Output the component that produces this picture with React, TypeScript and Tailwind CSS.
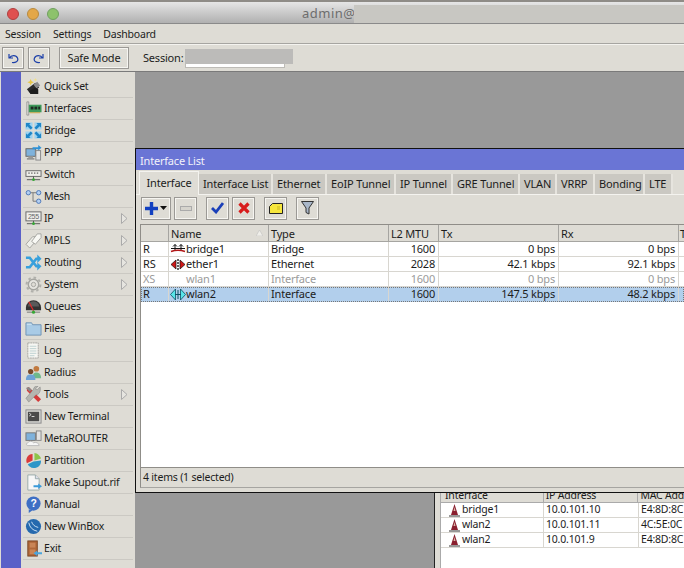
import React from "react";

const I = ({ children, s = 17 }: { children: React.ReactNode; s?: number }) => (
  <svg width={s} height={s} viewBox="0 0 18 18" className="shrink-0">{children}</svg>
);

const icons: Record<string, React.ReactNode> = {
  quick: (<I><path d="M2 12l9-7 4 5-9 7z" fill="#2b2b2b" /><path d="M9 7l4-3 3 4-4 3z" fill="#8a8a8a" /><path d="M4 14l2 3h8v-5l-3-2z" fill="#1e1e1e" /><path d="M6 1l1 2.5L9.5 4.500 7 5.500 6 8 5 5.500 2.500 4.500 5 3.500z" fill="#e8c84a" /><path d="M11 0l.6 1.400L13 2l-1.400.6L11 4l-.6-1.400L9 2l1.400-.6z" fill="#f2e08a" /></I>),
  iface: (<I><path d="M2 2h2v14H2z" fill="#e6e6e0" stroke="#888" strokeWidth=".8" /><rect x="4" y="5" width="13.500" height="8" fill="#3f9a5a" /><rect x="6" y="7" width="3" height="3" fill="#1e2a22" /><rect x="10" y="7" width="3" height="3" fill="#1e2a22" /><rect x="14" y="7" width="2" height="3" fill="#1e2a22" /><rect x="5" y="13" width="11" height="1" fill="#c9a640" /></I>),
  bridge: (<I><g fill="#9ed3f0"><rect x="0.500" y="0.500" width="7.500" height="7.500" /><rect x="10" y="0.500" width="7.500" height="7.500" /><rect x="0.500" y="10" width="7.500" height="7.500" /><rect x="10" y="10" width="7.500" height="7.500" /></g><g fill="#1f86c8"><path d="M1 1h5L4.500 2.500 8 6 6 8 2.500 4.500 1 6z" /><path d="M17 1h-5l1.500 1.500L10 6l2 2 3.500-3.500L17 6z" /><path d="M1 17h5l-1.500-1.500L8 12l-2-2-3.500 3.500L1 12z" /><path d="M17 17h-5l1.500-1.500L10 12l2-2 3.500 3.500L17 12z" /></g></I>),
  ppp: (<I><rect x="1" y="5" width="10" height="8" fill="#7fb2dc" stroke="#666" /><rect x="3.500" y="13" width="5" height="2" fill="#999" /><rect x="2" y="15" width="8" height="1.500" fill="#888" /><rect x="11.500" y="7" width="5" height="10" fill="#e2e2e2" stroke="#888" /><path d="M8 3.500h6V1l3.500 3L14 7V5.500H8z" fill="#2f92d6" /></I>),
  sw: (<I><rect x="1" y="5" width="16" height="6" fill="#f0f0ec" stroke="#666" /><path d="M3.500 7.500h1.500M6.500 7.500h1.500M9.500 7.500h1.500M12.500 7.500h1.500" stroke="#333" /><path d="M2 14.500h14" stroke="#555" /><path d="M9 11v3" stroke="#555" /><circle cx="9" cy="14.500" r="1.500" fill="#35a835" /></I>),
  mesh: (<I><circle cx="3.500" cy="5" r="2.300" fill="#b4d0f2" stroke="#4a76b8" /><circle cx="14.500" cy="5" r="2.300" fill="#b4d0f2" stroke="#4a76b8" /><circle cx="14.500" cy="14" r="2.300" fill="#b4d0f2" stroke="#4a76b8" /><path d="M6 5h2.500v9h3.500M8.500 5h3.500" fill="none" stroke="#777" /></I>),
  ip: (<I><rect x="1" y="2" width="16" height="9.500" fill="#f0f0ec" stroke="#666" /><text x="9" y="9.500" fontSize="7.500" textAnchor="middle" fill="#666" fontFamily="Liberation Sans">255</text><path d="M9 11.500v3M2 14.500h14" stroke="#555" /><circle cx="9" cy="14.500" r="1.500" fill="#35a835" /></I>),
  mpls: (<I><path d="M1 13l7-8h4v4l-7 8z" fill="#efefea" stroke="#a5a5a0" /><path d="M7 10l6-8h4v4l-6 7z" fill="#f8f8f4" stroke="#a5a5a0" /></I>),
  routing: (<I><path d="M1 4h4l7 9h2M1 14h4l7-9h2" fill="none" stroke="#37a0dc" strokeWidth="2.800" /><path d="M13 0.500l4.500 4.500L13 9.500zM13 9l4.500 4L13 17.500z" fill="#37a0dc" /></I>),
  system: (<I><circle cx="9" cy="9" r="5.500" fill="#e6e5e0" stroke="#a5a5a0" strokeWidth="1.500" /><circle cx="9" cy="9" r="2.300" fill="#dedcd5" stroke="#a5a5a0" /><circle cx="9" cy="9" r="7.300" fill="none" stroke="#b0b0ab" strokeWidth="2.200" strokeDasharray="2.700 3" /></I>),
  queues: (<I><path d="M1 10a8 7.500 0 0 1 16 0v3H1z" fill="#333" /><path d="M3 9a6 5.500 0 0 1 12 0z" fill="#5a5a5a" /><path d="M4 4l5 9.500" stroke="#e02a2a" strokeWidth="1.300" /><path d="M2 15h14" stroke="#777" /><circle cx="9" cy="15" r="1.700" fill="#35a835" /></I>),
  files: (<I><path d="M1 3h6l1 2h9v11H1z" fill="#a9cbe6" stroke="#6f93b4" /><path d="M2 4h5v1H2z" fill="#d4e6f4" /></I>),
  log: (<I><path d="M3 1h11v16H3z" fill="#f6f6f2" stroke="#a5a5a0" strokeDasharray="2 .6" /><path d="M5 4.500h7M5 7h7M5 9.500h7M5 12h7M5 14.500h5" stroke="#bcd0d0" /></I>),
  radius: (<I><circle cx="12" cy="5" r="3" fill="#c27a3f" /><path d="M8 15c0-5 2-6 4-6s5 1 5 6z" fill="#6fb98a" /><circle cx="6" cy="8" r="2.800" fill="#7a4a2a" /><path d="M1 17c0-5 2-6 5-6s5 1 5 6z" fill="#6ea2d6" /></I>),
  tools: (<I><path d="M2 2l2-1 13 13-3 3L2 5z" fill="#d43a3a" /><path d="M1 2l3-1 3 3-2 2z" fill="#888" /><path d="M16 1l-3 3-2-1 3-3c-2-.5-5 1-5 3.500L1 13l3 4 8-8c3 .5 5-4 4-8z" fill="#b5b5b0" stroke="#777" strokeWidth=".5" /></I>),
  term: (<I><rect x="1" y="2" width="16" height="14" fill="#dcdcd8" stroke="#888" /><rect x="3" y="4" width="12" height="10" fill="#4a4a4a" /><path d="M4.500 5.500l2 1.500-2 1.500" stroke="#ddd" fill="none" /><path d="M7 9h3" stroke="#ddd" /></I>),
  meta: (<I><rect x="1" y="3" width="10" height="8" fill="#7fb2dc" stroke="#777" /><rect x="12" y="1" width="5" height="10" fill="#e2e2e2" stroke="#888" /><path d="M3 16.500c-2 0-2-3 0-3 1-2 5-2 6 0 2-1 6 0 6 3z" fill="#f6f6f6" stroke="#bbb" /></I>),
  part: (<I><path d="M8 2v7l-6 3C0 7 3 2 8 2z" fill="#d93a3a" /><path d="M10 1c3 0 6 3 7 6l-7 2z" fill="#8ec44a" /><path d="M3 13l6-3 8-1c0 5-3 8-8 8-3 0-5-2-6-4z" fill="#2d96c8" /></I>),
  sup: (<I><path d="M3 1h8l4 4v12H3z" fill="#f7f7f7" stroke="#9aa" /><path d="M11 1v4h4" fill="#dde" stroke="#9aa" /><path d="M9 12h5v-2l4 3-4 3v-2H9z" fill="#3a9ad9" /></I>),
  manual: (<I><circle cx="9" cy="8" r="7.500" fill="#3e6fc4" /><path d="M4 14v4l4-3z" fill="#3e6fc4" /><text x="9" y="12" fontSize="11" fontWeight="700" textAnchor="middle" fill="#fff" fontFamily="Liberation Sans">?</text></I>),
  winbox: (<I><circle cx="9" cy="9" r="8" fill="#2569ae" /><path d="M4 5c1 5 4 8 9 9M7 4c1 3 3 5 7 6" stroke="#cfe3f5" fill="none" /></I>),
  exit: (<I><rect x="3" y="1" width="10" height="16" fill="#b0683a" stroke="#7a4522" /><rect x="5" y="3" width="6" height="5" fill="#c98556" /><rect x="5" y="10" width="6" height="5" fill="#c98556" /><path d="M18 13h-5v-2l-4 3 4 3v-2h5z" fill="#4aa5dd" /></I>),
};

const menu: [string, string, boolean?][] = [
  ["Quick Set", "quick"], ["Interfaces", "iface"], ["Bridge", "bridge"], ["PPP", "ppp"], ["Switch", "sw"], ["Mesh", "mesh"],
  ["IP", "ip", true], ["MPLS", "mpls", true], ["Routing", "routing", true], ["System", "system", true], ["Queues", "queues"],
  ["Files", "files"], ["Log", "log"], ["Radius", "radius"], ["Tools", "tools", true], ["New Terminal", "term"], ["MetaROUTER", "meta"],
  ["Partition", "part"], ["Make Supout.rif", "sup"], ["Manual", "manual"], ["New WinBox", "winbox"], ["Exit", "exit"],
];

const btn = "flex items-center justify-center bg-[#dedcd5] border border-[#9b9995] shadow-[inset_1px_1px_0_#f6f5f1,inset_-1px_-1px_0_#f6f5f1]";

const tabs: [string, string][] = [
  ["Interface List", "w-[74px]"], ["Ethernet", "w-[54px]"], ["EoIP Tunnel", "w-[69px]"], ["IP Tunnel", "w-[57px]"], ["GRE Tunnel", "w-[67px]"],
  ["VLAN", "w-[37px]"], ["VRRP", "w-[38px]"], ["Bonding", "w-[50px]"], ["LTE", "w-[28px]"],
];

const BridgeI = () => (<svg width="16" height="13" viewBox="0 0 16 13"><path d="M1 5.500h14M5 1.500v6M11 1.500v6M3 3.500l2-2 2 2M9 3.500l2-2 2 2" fill="none" stroke="#111" /><path d="M1 8.500c4-1.500 10-1.500 14 0" fill="none" stroke="#b01818" strokeWidth="1.500" /></svg>);
const EtherI = () => (<svg width="16" height="13" viewBox="0 0 16 13"><path d="M1 6.500L6 2v9zM15 6.500L10 2v9z" fill="#d01818" stroke="#111" strokeWidth=".7" /><path d="M8 1v11" stroke="#222" strokeWidth="1.400" strokeDasharray="2 1" /></svg>);
const WlanI = () => (<svg width="16" height="13" viewBox="0 0 16 13"><path d="M.5 6.500L5.500 1v11zM15.500 6.500L10.500 1v11z" fill="#58e4e8" stroke="#0c5064" strokeWidth=".8" /><path d="M5 6.500h6M8 2v9" stroke="#0c5064" /></svg>);

const rows = [
  { f: "R", n: "bridge1", t: "Bridge", m: "1600", tx: "0 bps", rx: "0 bps", icon: <BridgeI /> },
  { f: "RS", n: "ether1", t: "Ethernet", m: "2028", tx: "42.1 kbps", rx: "92.1 kbps", icon: <EtherI /> },
  { f: "XS", n: "wlan1", t: "Interface", m: "1600", tx: "0 bps", rx: "0 bps", dim: true },
  { f: "R", n: "wlan2", t: "Interface", m: "1600", tx: "147.5 kbps", rx: "48.2 kbps", icon: <WlanI />, sel: true },
];

const Cone = () => (<svg width="13" height="13" viewBox="0 0 13 13"><path d="M6.500 0L10 11H3z" fill="#8a1f2f" /><path d="M6.500 3l1 4h-2z" fill="#d9b8a8" /><path d="M1 12h11" stroke="#333" /></svg>);

export default function App() {
  return (
    <div className="relative w-[684px] h-[568px] overflow-hidden flex flex-col bg-[#999999] text-[10.5px] tracking-[-0.2px] text-[#1c1c1c]" style={{ fontFamily: '"Noto Sans", sans-serif' }}>
      <div className="h-[24px] shrink-0 flex items-center border-t-2 border-b border-t-[#8f8c87] border-b-[#8a8a8a] bg-gradient-to-b from-[#e6e6e6] to-[#b0b0b0]">
        <div className="flex gap-[8px] pl-[7px] pt-[2px]">
          <span className="w-[12px] h-[12px] rounded-full bg-[#e0504f] border border-[#b04040]" />
          <span className="w-[12px] h-[12px] rounded-full bg-[#e3a748] border border-[#b88a40]" />
          <span className="w-[12px] h-[12px] rounded-full bg-[#8dc26c] border border-[#70a060]" />
        </div>
        <span className="ml-[243px] w-[52px] shrink-0 pt-[2px] text-[13px] text-[#6d6d6d] tracking-[0.5px] whitespace-nowrap">admin@</span>
        <div className="flex-1 self-stretch mt-[3px] bg-[#c8c7c2]" />
      </div>
      <div className="h-[20px] shrink-0 flex items-center gap-[12px] pl-[5px] pt-[2px] bg-[#dedcd5] border-b border-[#a6a5a1]">
        <span>Session</span><span>Settings</span><span>Dashboard</span>
      </div>
      <div className="h-[28px] shrink-0 flex items-center pl-[2px] bg-[#dedcd5] border-t border-t-[#f4f3ef] border-b border-b-[#7a7a7a]">
        <div className={btn + " w-[22px] h-[22px]"}>
          <svg width="12" height="11" viewBox="0 0 12 11"><path d="M2 1v4h4M2.500 5C4 2 9 1.500 10.500 5S8 10 5 9.500" fill="none" stroke="#1c3fa8" strokeWidth="1.200" /></svg>
        </div>
        <div className={btn + " w-[22px] h-[22px] ml-[4px]"}>
          <svg width="12" height="11" viewBox="0 0 12 11"><path d="M10 1v4H6M9.500 5C8 2 3 1.500 1.500 5S4 10 7 9.500" fill="none" stroke="#1c3fa8" strokeWidth="1.200" /></svg>
        </div>
        <div className={btn + " w-[70px] h-[22px] ml-[9px] text-[11px]"}>Safe Mode</div>
        <span className="ml-[14px] w-[42px] shrink-0 text-[11px]">Session:</span>
        <div className="relative w-[100px] h-[19px] bg-white border border-[#bdbbb6]">
          <div className="absolute left-[-1px] top-[-1px] w-[108px] h-[15px] bg-[#bcbbb9]" />
        </div>
      </div>
      <div className="flex-1 min-h-0 flex">
        <div className="w-[1px] bg-[#dedcd5]" />
        <div className="w-[20px] bg-[#5a60c8]" />
        <div className="w-[114px] bg-[#dedcd5] flex flex-col pt-[4px] pr-[2px] pl-[2px]">
          {menu.map(([label, ic, arrow]) => (
            <div key={label} className="h-[22px] shrink-0 flex items-center border-b border-[#cbc9c3] relative">
              <span className="w-[17px] ml-[2px] flex items-center justify-center">{icons[ic]}</span>
              <span className="ml-[2px] whitespace-nowrap">{label}</span>
              {arrow && (
                <svg width="7" height="11" viewBox="0 0 7 11" className="absolute left-[98px] top-[5px]"><path d="M.5.5L6 5.500.5 10.500z" fill="#e6e5e0" stroke="#aaa" /></svg>
              )}
            </div>
          ))}
        </div>
        <div className="flex-1" />
      </div>

      {/* back window */}
      <div className="absolute left-[434px] top-[487px] w-[250px] h-[81px] overflow-hidden bg-[#dedcd5] border-l border-[#222] pl-[5px]">
        <div className="bg-white h-full border-l border-[#aaa]">
          <div className="h-[16px] bg-[#dedcd5] border-b border-[#aaa] flex items-end">
            <span className="w-[103px] pl-[4px] leading-[14px] border-r border-[#aaa]">Interface</span>
            <span className="w-[95px] pl-[2px] leading-[14px] border-r border-[#aaa]">IP Address</span>
            <span className="pl-[2px] leading-[14px] whitespace-nowrap">MAC Add</span>
          </div>
          {[["bridge1", "10.0.101.10", "E4:8D:8C"], ["wlan2", "10.0.101.11", "4C:5E:0C"], ["wlan2", "10.0.101.9", "E4:8D:8C"]].map((r, i) => (
            <div key={i} className="h-[15px] flex items-center border-b border-[#d8d6d0]">
              <span className="w-[103px] h-full flex items-center gap-[1px] pl-[7px] border-r border-[#d8d6d0]"><Cone />{r[0]}</span>
              <span className="w-[95px] h-full flex items-center pl-[2px] border-r border-[#d8d6d0]">{r[1]}</span>
              <span className="pl-[2px] whitespace-nowrap">{r[2]}</span>
            </div>
          ))}
        </div>
      </div>

      {/* Interface List window */}
      <div className="absolute left-[135px] top-[148px] w-[549px] h-[345px] overflow-hidden flex flex-col border-y border-l border-[#111] bg-[#dedcd5]">
        <div className="h-[21px] shrink-0 flex items-center pl-[4px] pt-[3px] bg-[#6a75d5] text-[#f2f2fa] text-[11px]">Interface List</div>
        <div className="h-[25px] shrink-0 flex items-end pl-[3px] border-b border-[#f4f3ef] relative">
          <div className="w-[60px] h-[24px] shrink-0 flex items-center justify-center bg-[#dedcd5] border border-b-0 border-[#f4f3ef] relative top-[1px] text-[11px]">Interface</div>
          {tabs.map(([t, w]) => (
            <div key={t} className={w + " h-[20px] shrink-0 flex items-center pl-[4px] pt-[1px] bg-[#cac8c2] border-r-2 border-[#e6e4de] whitespace-nowrap text-[11px] tracking-[-0.15px]"}>{t}</div>
          ))}
        </div>
        <div className="h-[29px] shrink-0 flex items-center pl-[5px] pb-[3px]">
          <div className={btn + " w-[30px] h-[23px] gap-[2px]"}>
            <svg width="13" height="13" viewBox="0 0 13 13"><path d="M6.500 0v13M0 6.500h13" stroke="#1240c0" strokeWidth="3.400" /></svg>
            <svg width="7" height="4" viewBox="0 0 7 4"><path d="M0 0h7L3.500 4z" fill="#111" /></svg>
          </div>
          <div className={btn + " w-[23px] h-[23px] ml-[3px]"}><div className="w-[12px] h-[5px] bg-[#d6d4cd] border border-[#aaa]" /></div>
          <div className={btn + " w-[23px] h-[23px] ml-[9px]"}>
            <svg width="13" height="12" viewBox="0 0 13 12"><path d="M1 6l4 4 7-9" fill="none" stroke="#1a3fb8" strokeWidth="2.800" /></svg>
          </div>
          <div className={btn + " w-[23px] h-[23px] ml-[3px]"}>
            <svg width="12" height="12" viewBox="0 0 12 12"><path d="M1.500 1.500l9 9M10.500 1.500l-9 9" stroke="#d81c1c" strokeWidth="3.200" /></svg>
          </div>
          <div className={btn + " w-[23px] h-[23px] ml-[9px]"}>
            <svg width="14" height="11" viewBox="0 0 14 11"><path d="M.5 3.500L3.500.5h10v10H.5z" fill="#f6e63c" stroke="#222" /><path d="M8 4h3M8 6h3" stroke="#c9b820" /></svg>
          </div>
          <div className={btn + " w-[23px] h-[23px] ml-[9px]"}>
            <svg width="13" height="14" viewBox="0 0 13 14"><path d="M.5.5h12L8 7v6l-3-1.500V7z" fill="#a9b7c9" stroke="#333" /></svg>
          </div>
        </div>
        <div className="flex-1 min-h-0 ml-[4px] flex flex-col bg-white border-t border-l border-[#8f8d88] text-[11px]">
          <div className="h-[17px] shrink-0 flex bg-[#dedcd5] border-b border-[#a6a5a1] leading-[17px]">
            <span className="w-[28px] shrink-0 border-r border-[#a6a5a1]" />
            <span className="w-[100px] shrink-0 pl-[2px] border-r border-[#a6a5a1] relative">Name
              <svg width="7" height="6" viewBox="0 0 7 6" className="absolute right-[5px] top-[5px]"><path d="M3.500 0L7 6H0z" fill="#efeee9" stroke="#bbb" strokeWidth=".5" /></svg>
            </span>
            <span className="w-[120px] shrink-0 pl-[2px] border-r border-[#a6a5a1]">Type</span>
            <span className="w-[50px] shrink-0 pl-[2px] border-r border-[#a6a5a1]">L2 MTU</span>
            <span className="w-[120px] shrink-0 pl-[2px] border-r border-[#a6a5a1]">Tx</span>
            <span className="w-[120px] shrink-0 pl-[2px] border-r border-[#a6a5a1]">Rx</span>
            <span className="shrink-0 pl-[1px]">T</span>
          </div>
          {rows.map((r) => (
            <div key={r.n} className={"h-[15px] shrink-0 flex items-center leading-[14px] border-b " + (r.sel ? "bg-[#b2cfec] border-dotted border-[#555] outline-1 outline-dotted outline-[#777] -outline-offset-1" : "border-[#d8d6d0]") + (r.dim ? " text-[#9b9b9b]" : "")}>
              <span className="w-[28px] h-full pl-[2px] border-r border-[#d8d6d0]">{r.f}</span>
              <span className="w-[100px] h-full flex items-center border-r border-[#d8d6d0]">
                <span className="w-[16px] ml-[1px] flex justify-end shrink-0">{r.icon}</span>{r.n}
              </span>
              <span className="w-[120px] h-full pl-[2px] border-r border-[#d8d6d0]">{r.t}</span>
              <span className="w-[50px] h-full pr-[3px] text-right border-r border-[#d8d6d0]">{r.m}</span>
              <span className="w-[120px] h-full pr-[3px] text-right border-r border-[#d8d6d0]">{r.tx}</span>
              <span className="w-[120px] h-full pr-[3px] text-right border-r border-[#d8d6d0]">{r.rx}</span>
            </div>
          ))}
          <div className="flex-1" />
        </div>
        <div className="h-[21px] shrink-0 ml-[4px] flex items-center pl-[2px] border-t border-[#8f8d88] border-b border-b-[#a6a5a1] border-l border-l-[#8f8d88]">4 items (1 selected)</div>
        <div className="h-[4px] shrink-0" />
      </div>
    </div>
  );
}
